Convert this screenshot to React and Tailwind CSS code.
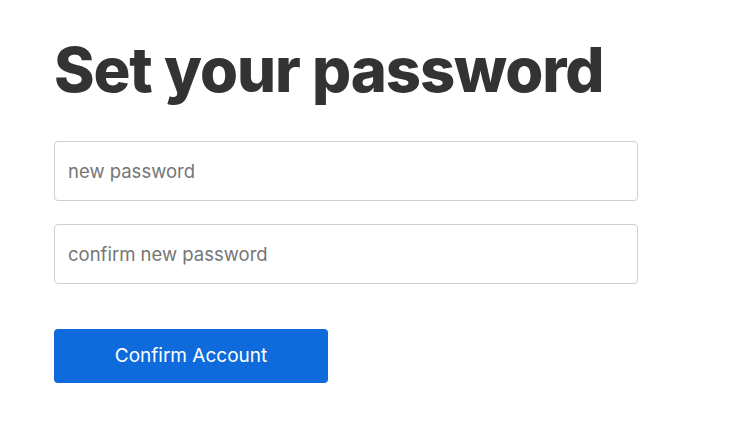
import React from 'react';

const App = () => {
    return (
        <div className="min-h-screen bg-white" style={{ fontFamily: 'Inter, "Noto Sans", sans-serif' }}>
            <div className="pl-[54px] pt-[31px] w-[638px]">
                {/* Heading */}
                <h1 className="text-[61.5px] leading-[78px] font-extrabold text-[#333333] tracking-[-1.1px]">
                    Set your password
                </h1>

                {/* Password fields */}
                <div className="mt-[32px] flex flex-col gap-[23px]">
                    <input
                        type="password"
                        placeholder="new password"
                        className="w-[584px] h-[60px] px-[13px] border border-[#cfcfcf] rounded-[4px] text-[18.5px] text-[#333] placeholder:text-[#767676] outline-none"
                    />
                    <input
                        type="password"
                        placeholder="confirm new password"
                        className="w-[584px] h-[60px] px-[13px] border border-[#cfcfcf] rounded-[4px] text-[18.5px] text-[#333] placeholder:text-[#767676] outline-none"
                    />
                </div>

                {/* Submit */}
                <button className="mt-[45px] w-[274px] h-[54px] rounded-[4px] bg-[#0f6bdc] text-white text-[19px]">
                    Confirm Account
                </button>
            </div>
        </div>
    );
};

export default App;
